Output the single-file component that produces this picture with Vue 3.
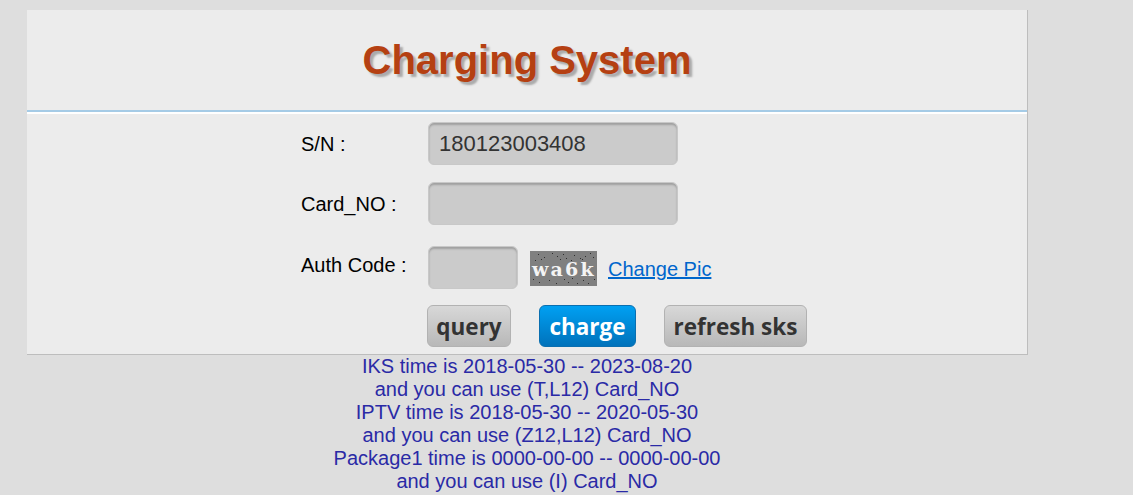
<script setup>
const dots = [
  [8, 3], [14, 6], [22, 2], [27, 5], [33, 3], [36, 7], [44, 4], [50, 7], [55, 5], [60, 2], [63, 6],
  [5, 9], [11, 8], [3, 28], [9, 31], [19, 29], [26, 32], [34, 28], [38, 31], [42, 27], [47, 32],
  [53, 29], [58, 32], [64, 28], [30, 8], [41, 9], [52, 8],
]
const infoLines = [
  'IKS time is 2018-05-30 -- 2023-08-20',
  'and you can use (T,L12) Card_NO',
  'IPTV time is 2018-05-30 -- 2020-05-30',
  'and you can use (Z12,L12) Card_NO',
  'Package1 time is 0000-00-00 -- 0000-00-00',
  'and you can use (I) Card_NO',
]
</script>

<template>
  <div class="page">
    <div class="card">
      <div class="head">
        <h1>Charging System</h1>
      </div>
      <form class="form" @submit.prevent>
        <div class="row">
          <label>S/N :</label>
          <input class="field" type="text" value="180123003408" />
        </div>
        <div class="row">
          <label>Card_NO :</label>
          <input class="field" type="text" />
        </div>
        <div class="row row-auth">
          <label>Auth Code :</label>
          <input class="field short" type="text" />
          <svg class="captcha" width="67" height="35" viewBox="0 0 67 35">
            <rect width="67" height="35" fill="#808080" />
            <rect v-for="(d, i) in dots" :key="i" :x="d[0]" :y="d[1]" width="1" height="1" fill="#2e2e2e" />
            <text x="2" y="25" class="captcha-text">wa6k</text>
          </svg>
          <a class="change" href="#">Change Pic</a>
        </div>
        <div class="actions">
          <button class="btn query">query</button>
          <button class="btn primary">charge</button>
          <button class="btn refresh">refresh sks</button>
        </div>
      </form>
    </div>
    <div class="info">
      <div v-for="line in infoLines" :key="line">{{ line }}</div>
    </div>
  </div>
</template>

<style>
html,
body {
  margin: 0;
  background: #dedede;
}
</style>

<style scoped>
.page {
  width: 1133px;
  height: 495px;
  overflow: hidden;
  padding: 10px 0 0 27px;
  box-sizing: border-box;
  font-family: "Liberation Sans", Arial, sans-serif;
}
.card {
  width: 1001px;
  height: 345px;
  box-sizing: border-box;
  background: #ececec;
  border-right: 1px solid #bdbdbd;
  border-bottom: 1px solid #bdbdbd;
}
.head {
  height: 100px;
  border-bottom: 2px solid #a5cbe6;
  box-shadow: 0 2px 0 #fff;
  display: flex;
  justify-content: center;
  align-items: center;
}
h1 {
  margin: 0;
  font-size: 40px;
  font-weight: bold;
  color: #b54012;
  text-shadow: 3px 3px 2px #aaa;
}
.form {
  padding-top: 10px;
}
.row {
  display: flex;
  align-items: flex-start;
  height: 43px;
  margin-bottom: 17px;
  padding-left: 274px;
}
.row-auth {
  margin-top: 21px;
  margin-bottom: 16px;
}
label {
  width: 127px;
  flex: none;
  font-size: 20px;
  line-height: 44px;
  color: #000;
}
.row-auth label {
  line-height: 38px;
}
.field {
  width: 250px;
  height: 43px;
  box-sizing: border-box;
  padding: 0 10px;
  border: 1px solid #c8c8c8;
  border-radius: 6px;
  background: #cbcbcb;
  box-shadow: inset 0 2px 2px #a0a0a0;
  font-family: "Liberation Sans", Arial, sans-serif;
  font-size: 22px;
  color: #333;
  outline: none;
}
.short {
  width: 90px;
}
.captcha {
  margin: 5px 0 0 12px;
  flex: none;
}
.captcha-text {
  font-family: "DejaVu Serif", serif;
  font-size: 19px;
  font-weight: bold;
  letter-spacing: 2.2px;
  fill: #f4f4f4;
}
.change {
  margin: 12px 0 0 11px;
  font-size: 20px;
  color: #0066cc;
}
.actions {
  display: flex;
  gap: 28px;
  padding-left: 400px;
}
.btn {
  height: 42px;
  box-sizing: border-box;
  padding: 0;
  border: 1px solid #b2b2b2;
  border-radius: 6px;
  background: linear-gradient(#d8d8d8, #b8b8b8);
  font-family: "Open Sans", "Liberation Sans", sans-serif;
  font-size: 22.5px;
  font-weight: bold;
  color: #333;
}
.query {
  width: 84px;
}
.primary {
  width: 97px;
  border-color: #0a6fb0;
  background: linear-gradient(#00a0f2, #0072bb);
  color: #fff;
}
.refresh {
  width: 143px;
}
.info {
  width: 1000px;
  text-align: center;
  font-size: 20px;
  line-height: 23px;
  color: #2a2aa6;
}
</style>
